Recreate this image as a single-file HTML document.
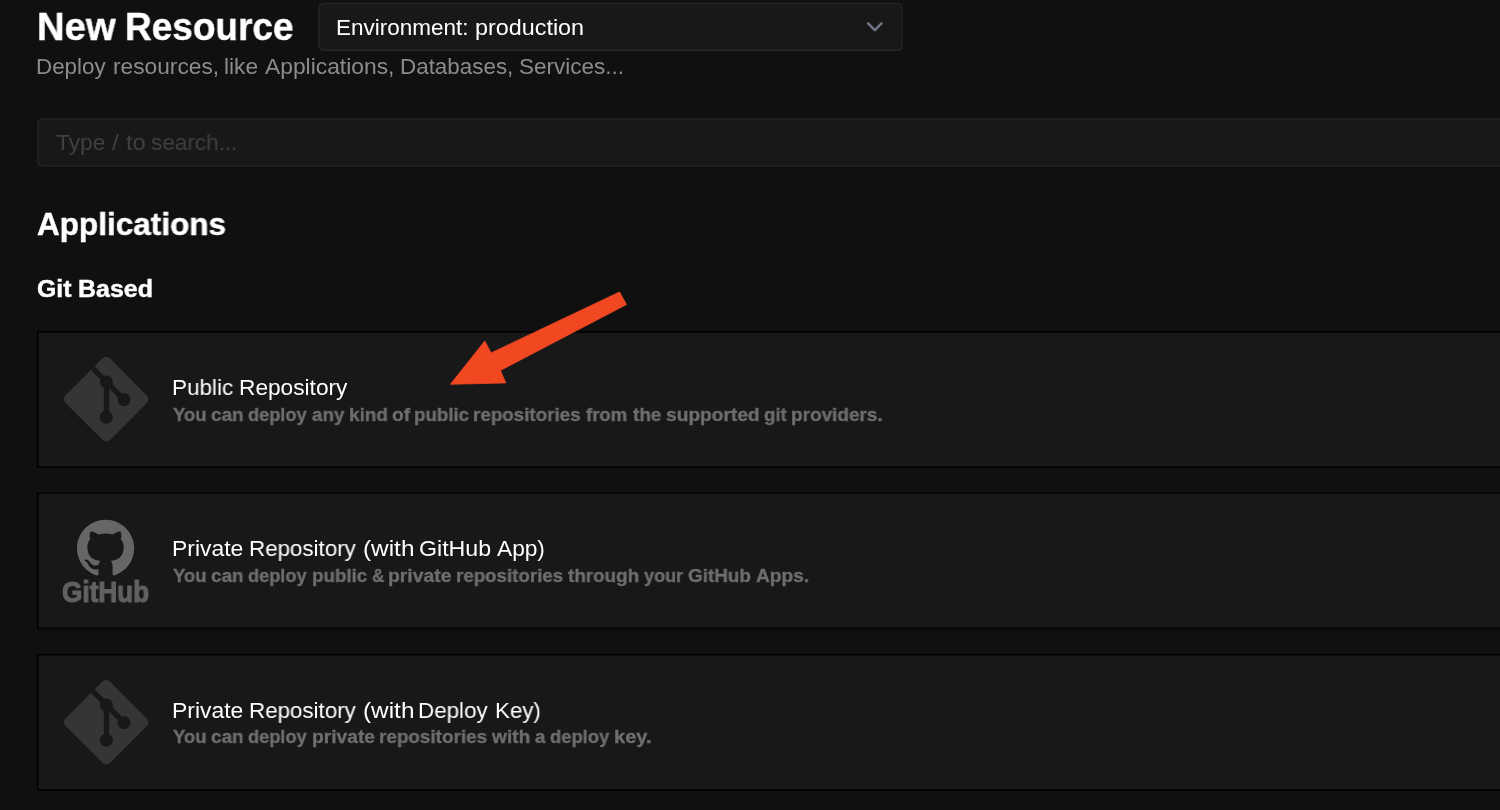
<!DOCTYPE html>
<html lang="en"><head><meta charset="utf-8"><title>New Resource</title>
<style>
html,body{margin:0;padding:0;background:#101010;}
body{width:1500px;height:810px;overflow:hidden;position:relative;font-family:"Liberation Sans",sans-serif;}
h1,h2,h3,h4,p,header,main,section,label,div{margin:0;padding:0;font:inherit;display:block;}
.t{position:absolute;display:block;white-space:nowrap;transform-origin:0 50%;will-change:transform;}
svg{position:absolute;left:0;top:0;overflow:visible}
</style></head><body>
<header>
<h1>
<span class="t" id="title_1" style="left:36.61px;top:6.56px;font-size:39.5px;line-height:39.5px;font-weight:700;color:#ffffff;-webkit-text-stroke:0.45px #fff;transform:scaleX(0.9693)">New</span>
<span class="t" id="title_2" style="left:125.23px;top:6.56px;font-size:39.5px;line-height:39.5px;font-weight:700;color:#ffffff;-webkit-text-stroke:0.45px #fff;transform:scaleX(0.9364)">Resource</span>
</h1>
<div class="select" role="combobox" aria-label="Environment">
<svg class="bg" width="1500" height="810" viewBox="0 0 1500 810"><rect x="319.2" y="3.5" width="582.8" height="46.8" rx="4.5" fill="#181818" stroke="#252525" stroke-width="1.5"/></svg>
<span class="t" id="sel_1" style="left:335.70px;top:16.91px;font-size:22.2px;line-height:22.2px;font-weight:400;color:#ffffff;transform:scaleX(1.0145)">Environment:</span>
<span class="t" id="sel_2" style="left:474.70px;top:16.91px;font-size:22.2px;line-height:22.2px;font-weight:400;color:#ffffff;transform:scaleX(1.0528)">production</span>
<svg class="chev" width="1500" height="60" viewBox="0 0 1500 60"><path d="M868.1 23.3 L874.8 30.2 L881.5 23.3" fill="none" stroke="#6f7486" stroke-width="2.5" stroke-linecap="round" stroke-linejoin="round"/></svg>
</div>
<p class="subtitle">
<span class="t" id="sub_1" style="left:36.30px;top:56.31px;font-size:22.2px;line-height:22.2px;font-weight:400;color:#8c8c8c;transform:scaleX(1.0074)">Deploy</span>
<span class="t" id="sub_2" style="left:112.73px;top:56.31px;font-size:22.2px;line-height:22.2px;font-weight:400;color:#8c8c8c;transform:scaleX(1.0238)">resources,</span>
<span class="t" id="sub_3" style="left:224.24px;top:56.31px;font-size:22.2px;line-height:22.2px;font-weight:400;color:#8c8c8c;transform:scaleX(1.0221)">like</span>
<span class="t" id="sub_4" style="left:264.72px;top:56.31px;font-size:22.2px;line-height:22.2px;font-weight:400;color:#8c8c8c;transform:scaleX(1.0288)">Applications,</span>
<span class="t" id="sub_5" style="left:399.52px;top:56.31px;font-size:22.2px;line-height:22.2px;font-weight:400;color:#8c8c8c;transform:scaleX(1.0097)">Databases,</span>
<span class="t" id="sub_6" style="left:518.70px;top:56.31px;font-size:22.2px;line-height:22.2px;font-weight:400;color:#8c8c8c;transform:scaleX(1.0136)">Services...</span>
</p>
</header>
<main>
<div class="search" role="searchbox">
<svg class="bg" width="1500" height="810" viewBox="0 0 1500 810"><rect x="38" y="119" width="1480" height="47" rx="4.5" fill="#181818" stroke="#252525" stroke-width="1.5"/></svg>
<label class="placeholder">
<span class="t" id="ph_1" style="left:55.66px;top:131.00px;font-size:22.8px;line-height:22.8px;font-weight:400;color:#404040;transform:scaleX(1.0009)">Type</span>
<span class="t" id="ph_2" style="left:111.82px;top:131.00px;font-size:22.8px;line-height:22.8px;font-weight:400;color:#404040;transform:scaleX(1.0799)">/</span>
<span class="t" id="ph_3" style="left:125.69px;top:131.00px;font-size:22.8px;line-height:22.8px;font-weight:400;color:#404040;transform:scaleX(1.0445)">to</span>
<span class="t" id="ph_4" style="left:150.68px;top:131.00px;font-size:22.8px;line-height:22.8px;font-weight:400;color:#404040;transform:scaleX(0.9886)">search...</span>
</label>
</div>
<h2>
<span class="t" id="h2" style="left:36.61px;top:208.55px;font-size:31.6px;line-height:31.6px;font-weight:700;color:#ffffff;-webkit-text-stroke:0.45px #fff;transform:scaleX(0.9969)">Applications</span>
</h2>
<h3>
<span class="t" id="h3_1" style="left:36.51px;top:276.55px;font-size:24.4px;line-height:24.4px;font-weight:700;color:#ffffff;-webkit-text-stroke:0.45px #fff;transform:scaleX(1.0165)">Git</span>
<span class="t" id="h3_2" style="left:78.45px;top:276.55px;font-size:24.4px;line-height:24.4px;font-weight:700;color:#ffffff;-webkit-text-stroke:0.45px #fff;transform:scaleX(1.0229)">Based</span>
</h3>
<section class="card">
<svg class="bg" width="1500" height="810" viewBox="0 0 1500 810"><rect x="37.75" y="331.85" width="1480" height="135.2" rx="0.4" fill="#181818" stroke="#020202" stroke-width="1.7"/></svg>
<svg class="ico" style="left:63.6px;top:357.0px" width="84.4" height="84.4" viewBox="0 0 24 24"><path fill="#353535" d="M23.546 10.93L13.067.452c-.604-.603-1.582-.603-2.188 0L8.708 2.627l2.76 2.76c.645-.215 1.379-.07 1.889.441.516.515.658 1.258.438 1.9l2.658 2.66c.645-.223 1.387-.078 1.9.435.721.72.721 1.884 0 2.604-.719.719-1.881.719-2.6 0-.539-.541-.674-1.337-.404-1.996L12.86 8.955v6.525c.176.086.342.203.488.348.713.721.713 1.883 0 2.6-.719.721-1.889.721-2.609 0-.719-.719-.719-1.879 0-2.598.182-.18.387-.316.605-.406V8.835c-.217-.091-.424-.222-.6-.401-.545-.545-.676-1.342-.396-2.009L7.636 3.7.45 10.881c-.6.605-.6 1.584 0 2.189l10.48 10.477c.604.604 1.582.604 2.186 0l10.43-10.43c.605-.603.605-1.582 0-2.187"/></svg>
<h4>
<span class="t" id="t1_1" style="left:171.89px;top:375.78px;font-size:22.7px;line-height:22.7px;font-weight:400;color:#ffffff;transform:scaleX(0.9902)">Public</span>
<span class="t" id="t1_2" style="left:239.44px;top:375.78px;font-size:22.7px;line-height:22.7px;font-weight:400;color:#ffffff;transform:scaleX(0.9959)">Repository</span>
</h4>
<p>
<span class="t" id="d1_1" style="left:172.95px;top:405.35px;font-size:19.2px;line-height:19.2px;font-weight:700;color:#6e6e6e;-webkit-text-stroke:0.35px #6e6e6e;transform:scaleX(0.9655)">You</span>
<span class="t" id="d1_2" style="left:210.80px;top:405.35px;font-size:19.2px;line-height:19.2px;font-weight:700;color:#6e6e6e;-webkit-text-stroke:0.35px #6e6e6e;transform:scaleX(0.9865)">can</span>
<span class="t" id="d1_3" style="left:248.00px;top:405.35px;font-size:19.2px;line-height:19.2px;font-weight:700;color:#6e6e6e;-webkit-text-stroke:0.35px #6e6e6e;transform:scaleX(0.9471)">deploy</span>
<span class="t" id="d1_4" style="left:311.70px;top:405.35px;font-size:19.2px;line-height:19.2px;font-weight:700;color:#6e6e6e;-webkit-text-stroke:0.35px #6e6e6e;transform:scaleX(0.9773)">any</span>
<span class="t" id="d1_5" style="left:348.75px;top:405.35px;font-size:19.2px;line-height:19.2px;font-weight:700;color:#6e6e6e;-webkit-text-stroke:0.35px #6e6e6e;transform:scaleX(0.9849)">kind</span>
<span class="t" id="d1_6" style="left:391.67px;top:405.35px;font-size:19.2px;line-height:19.2px;font-weight:700;color:#6e6e6e;-webkit-text-stroke:0.35px #6e6e6e;transform:scaleX(0.9955)">of</span>
<span class="t" id="d1_7" style="left:414.49px;top:405.35px;font-size:19.2px;line-height:19.2px;font-weight:700;color:#6e6e6e;-webkit-text-stroke:0.35px #6e6e6e;transform:scaleX(0.9735)">public</span>
<span class="t" id="d1_8" style="left:473.42px;top:405.35px;font-size:19.2px;line-height:19.2px;font-weight:700;color:#6e6e6e;-webkit-text-stroke:0.35px #6e6e6e;transform:scaleX(0.9794)">repositories</span>
<span class="t" id="d1_9" style="left:586.47px;top:405.35px;font-size:19.2px;line-height:19.2px;font-weight:700;color:#6e6e6e;-webkit-text-stroke:0.35px #6e6e6e;transform:scaleX(0.9675)">from</span>
<span class="t" id="d1_10" style="left:632.87px;top:405.35px;font-size:19.2px;line-height:19.2px;font-weight:700;color:#6e6e6e;-webkit-text-stroke:0.35px #6e6e6e;transform:scaleX(0.9863)">the</span>
<span class="t" id="d1_11" style="left:665.99px;top:405.35px;font-size:19.2px;line-height:19.2px;font-weight:700;color:#6e6e6e;-webkit-text-stroke:0.35px #6e6e6e;transform:scaleX(0.9980)">supported</span>
<span class="t" id="d1_12" style="left:763.74px;top:405.35px;font-size:19.2px;line-height:19.2px;font-weight:700;color:#6e6e6e;-webkit-text-stroke:0.35px #6e6e6e;transform:scaleX(0.9697)">git</span>
<span class="t" id="d1_13" style="left:790.83px;top:405.35px;font-size:19.2px;line-height:19.2px;font-weight:700;color:#6e6e6e;-webkit-text-stroke:0.35px #6e6e6e;transform:scaleX(0.9876)">providers.</span>
</p>
</section>
<section class="card">
<svg class="bg" width="1500" height="810" viewBox="0 0 1500 810"><rect x="37.75" y="493.25" width="1480" height="135.2" rx="0.4" fill="#181818" stroke="#020202" stroke-width="1.7"/></svg>
<svg class="ico" style="left:76.9px;top:518.5px" width="57.2" height="57.2" viewBox="0 0 24 24"><path fill="#666666" d="M12 .297c-6.63 0-12 5.373-12 12 0 5.303 3.438 9.8 8.205 11.385.6.113.82-.258.82-.577 0-.285-.01-1.04-.015-2.04-3.338.724-4.042-1.61-4.042-1.61C4.422 18.07 3.633 17.7 3.633 17.7c-1.087-.744.084-.729.084-.729 1.205.084 1.838 1.236 1.838 1.236 1.07 1.835 2.809 1.305 3.495.998.108-.776.417-1.305.76-1.605-2.665-.3-5.466-1.332-5.466-5.93 0-1.31.465-2.38 1.235-3.22-.135-.303-.54-1.523.105-3.176 0 0 1.005-.322 3.3 1.23.96-.267 1.98-.399 3-.405 1.02.006 2.04.138 3 .405 2.28-1.552 3.285-1.23 3.285-1.23.645 1.653.24 2.873.12 3.176.765.84 1.23 1.91 1.23 3.22 0 4.61-2.805 5.625-5.475 5.92.42.36.81 1.096.81 2.22 0 1.606-.015 2.896-.015 3.286 0 .315.21.69.825.57C20.565 22.092 24 17.592 24 12.297c0-6.627-5.373-12-12-12"/></svg>
<span class="t" id="gh" style="left:62.33px;top:577.79px;font-size:28.6px;line-height:28.6px;font-weight:700;color:#616161;-webkit-text-stroke:1.1px #616161;transform:scaleX(0.9149)">GitHub</span>
<h4>
<span class="t" id="t2_1" style="left:171.83px;top:537.18px;font-size:22.7px;line-height:22.7px;font-weight:400;color:#ffffff;transform:scaleX(1.0096)">Private</span>
<span class="t" id="t2_2" style="left:248.64px;top:537.18px;font-size:22.7px;line-height:22.7px;font-weight:400;color:#ffffff;transform:scaleX(0.9849)">Repository</span>
<span class="t" id="t2_3" style="left:363.28px;top:537.18px;font-size:22.7px;line-height:22.7px;font-weight:400;color:#ffffff;transform:scaleX(1.0736)">(with</span>
<span class="t" id="t2_4" style="left:419.24px;top:537.18px;font-size:22.7px;line-height:22.7px;font-weight:400;color:#ffffff;transform:scaleX(1.0214)">GitHub</span>
<span class="t" id="t2_5" style="left:497.13px;top:537.18px;font-size:22.7px;line-height:22.7px;font-weight:400;color:#ffffff;transform:scaleX(0.9907)">App)</span>
</h4>
<p>
<span class="t" id="d2_1" style="left:172.95px;top:565.85px;font-size:19.2px;line-height:19.2px;font-weight:700;color:#6e6e6e;-webkit-text-stroke:0.35px #6e6e6e;transform:scaleX(0.9637)">You</span>
<span class="t" id="d2_2" style="left:210.80px;top:565.85px;font-size:19.2px;line-height:19.2px;font-weight:700;color:#6e6e6e;-webkit-text-stroke:0.35px #6e6e6e;transform:scaleX(0.9844)">can</span>
<span class="t" id="d2_3" style="left:248.00px;top:565.85px;font-size:19.2px;line-height:19.2px;font-weight:700;color:#6e6e6e;-webkit-text-stroke:0.35px #6e6e6e;transform:scaleX(0.9468)">deploy</span>
<span class="t" id="d2_4" style="left:312.49px;top:565.85px;font-size:19.2px;line-height:19.2px;font-weight:700;color:#6e6e6e;-webkit-text-stroke:0.35px #6e6e6e;transform:scaleX(0.9768)">public</span>
<span class="t" id="d2_5" style="left:371.65px;top:565.85px;font-size:19.2px;line-height:19.2px;font-weight:700;color:#6e6e6e;-webkit-text-stroke:0.35px #6e6e6e;transform:scaleX(0.8902)">&amp;</span>
<span class="t" id="d2_6" style="left:388.27px;top:565.85px;font-size:19.2px;line-height:19.2px;font-weight:700;color:#6e6e6e;-webkit-text-stroke:0.35px #6e6e6e;transform:scaleX(1.0077)">private</span>
<span class="t" id="d2_7" style="left:455.50px;top:565.85px;font-size:19.2px;line-height:19.2px;font-weight:700;color:#6e6e6e;-webkit-text-stroke:0.35px #6e6e6e;transform:scaleX(0.9749)">repositories</span>
<span class="t" id="d2_8" style="left:568.22px;top:565.85px;font-size:19.2px;line-height:19.2px;font-weight:700;color:#6e6e6e;-webkit-text-stroke:0.35px #6e6e6e;transform:scaleX(0.9815)">through</span>
<span class="t" id="d2_9" style="left:643.51px;top:565.85px;font-size:19.2px;line-height:19.2px;font-weight:700;color:#6e6e6e;-webkit-text-stroke:0.35px #6e6e6e;transform:scaleX(0.9390)">your</span>
<span class="t" id="d2_10" style="left:687.53px;top:565.85px;font-size:19.2px;line-height:19.2px;font-weight:700;color:#6e6e6e;-webkit-text-stroke:0.35px #6e6e6e;transform:scaleX(0.9830)">GitHub</span>
<span class="t" id="d2_11" style="left:755.84px;top:565.85px;font-size:19.2px;line-height:19.2px;font-weight:700;color:#6e6e6e;-webkit-text-stroke:0.35px #6e6e6e;transform:scaleX(0.9974)">Apps.</span>
</p>
</section>
<section class="card">
<svg class="bg" width="1500" height="810" viewBox="0 0 1500 810"><rect x="37.75" y="654.65" width="1480" height="135.2" rx="0.4" fill="#181818" stroke="#020202" stroke-width="1.7"/></svg>
<svg class="ico" style="left:63.6px;top:680.0px" width="84.4" height="84.4" viewBox="0 0 24 24"><path fill="#353535" d="M23.546 10.93L13.067.452c-.604-.603-1.582-.603-2.188 0L8.708 2.627l2.76 2.76c.645-.215 1.379-.07 1.889.441.516.515.658 1.258.438 1.9l2.658 2.66c.645-.223 1.387-.078 1.9.435.721.72.721 1.884 0 2.604-.719.719-1.881.719-2.6 0-.539-.541-.674-1.337-.404-1.996L12.86 8.955v6.525c.176.086.342.203.488.348.713.721.713 1.883 0 2.6-.719.721-1.889.721-2.609 0-.719-.719-.719-1.879 0-2.598.182-.18.387-.316.605-.406V8.835c-.217-.091-.424-.222-.6-.401-.545-.545-.676-1.342-.396-2.009L7.636 3.7.45 10.881c-.6.605-.6 1.584 0 2.189l10.48 10.477c.604.604 1.582.604 2.186 0l10.43-10.43c.605-.603.605-1.582 0-2.187"/></svg>
<h4>
<span class="t" id="t3_1" style="left:171.83px;top:699.38px;font-size:22.7px;line-height:22.7px;font-weight:400;color:#ffffff;transform:scaleX(1.0096)">Private</span>
<span class="t" id="t3_2" style="left:248.64px;top:699.38px;font-size:22.7px;line-height:22.7px;font-weight:400;color:#ffffff;transform:scaleX(0.9849)">Repository</span>
<span class="t" id="t3_3" style="left:363.28px;top:699.38px;font-size:22.7px;line-height:22.7px;font-weight:400;color:#ffffff;transform:scaleX(1.0736)">(with</span>
<span class="t" id="t3_4" style="left:418.30px;top:699.38px;font-size:22.7px;line-height:22.7px;font-weight:400;color:#ffffff;transform:scaleX(0.9864)">Deploy</span>
<span class="t" id="t3_5" style="left:494.77px;top:699.38px;font-size:22.7px;line-height:22.7px;font-weight:400;color:#ffffff;transform:scaleX(0.9833)">Key)</span>
</h4>
<p>
<span class="t" id="d3_1" style="left:172.95px;top:727.15px;font-size:19.2px;line-height:19.2px;font-weight:700;color:#6e6e6e;-webkit-text-stroke:0.35px #6e6e6e;transform:scaleX(0.9669)">You</span>
<span class="t" id="d3_2" style="left:211.20px;top:727.15px;font-size:19.2px;line-height:19.2px;font-weight:700;color:#6e6e6e;-webkit-text-stroke:0.35px #6e6e6e;transform:scaleX(0.9852)">can</span>
<span class="t" id="d3_3" style="left:248.00px;top:727.15px;font-size:19.2px;line-height:19.2px;font-weight:700;color:#6e6e6e;-webkit-text-stroke:0.35px #6e6e6e;transform:scaleX(0.9481)">deploy</span>
<span class="t" id="d3_4" style="left:311.60px;top:727.15px;font-size:19.2px;line-height:19.2px;font-weight:700;color:#6e6e6e;-webkit-text-stroke:0.35px #6e6e6e;transform:scaleX(1.0012)">private</span>
<span class="t" id="d3_5" style="left:378.92px;top:727.15px;font-size:19.2px;line-height:19.2px;font-weight:700;color:#6e6e6e;-webkit-text-stroke:0.35px #6e6e6e;transform:scaleX(0.9839)">repositories</span>
<span class="t" id="d3_6" style="left:491.90px;top:727.15px;font-size:19.2px;line-height:19.2px;font-weight:700;color:#6e6e6e;-webkit-text-stroke:0.35px #6e6e6e;transform:scaleX(0.9940)">with</span>
<span class="t" id="d3_7" style="left:534.80px;top:727.15px;font-size:19.2px;line-height:19.2px;font-weight:700;color:#6e6e6e;-webkit-text-stroke:0.35px #6e6e6e;transform:scaleX(0.9671)">a</span>
<span class="t" id="d3_8" style="left:549.84px;top:727.15px;font-size:19.2px;line-height:19.2px;font-weight:700;color:#6e6e6e;-webkit-text-stroke:0.35px #6e6e6e;transform:scaleX(0.9575)">deploy</span>
<span class="t" id="d3_9" style="left:613.59px;top:727.15px;font-size:19.2px;line-height:19.2px;font-weight:700;color:#6e6e6e;-webkit-text-stroke:0.35px #6e6e6e;transform:scaleX(1.0427)">key.</span>
</p>
</section>
</main>
<svg class="arrow" width="1500" height="810" viewBox="0 0 1500 810"><path fill="#f24822" stroke="#f24822" stroke-width="0.8" stroke-linejoin="round" d="M619.5 292.0 L626.5 304.5 L500.4 370.4 L505.8 382.9 L450.4 384.3 L484.8 341.0 L491.1 352.9 Z"/></svg>
</body></html>
